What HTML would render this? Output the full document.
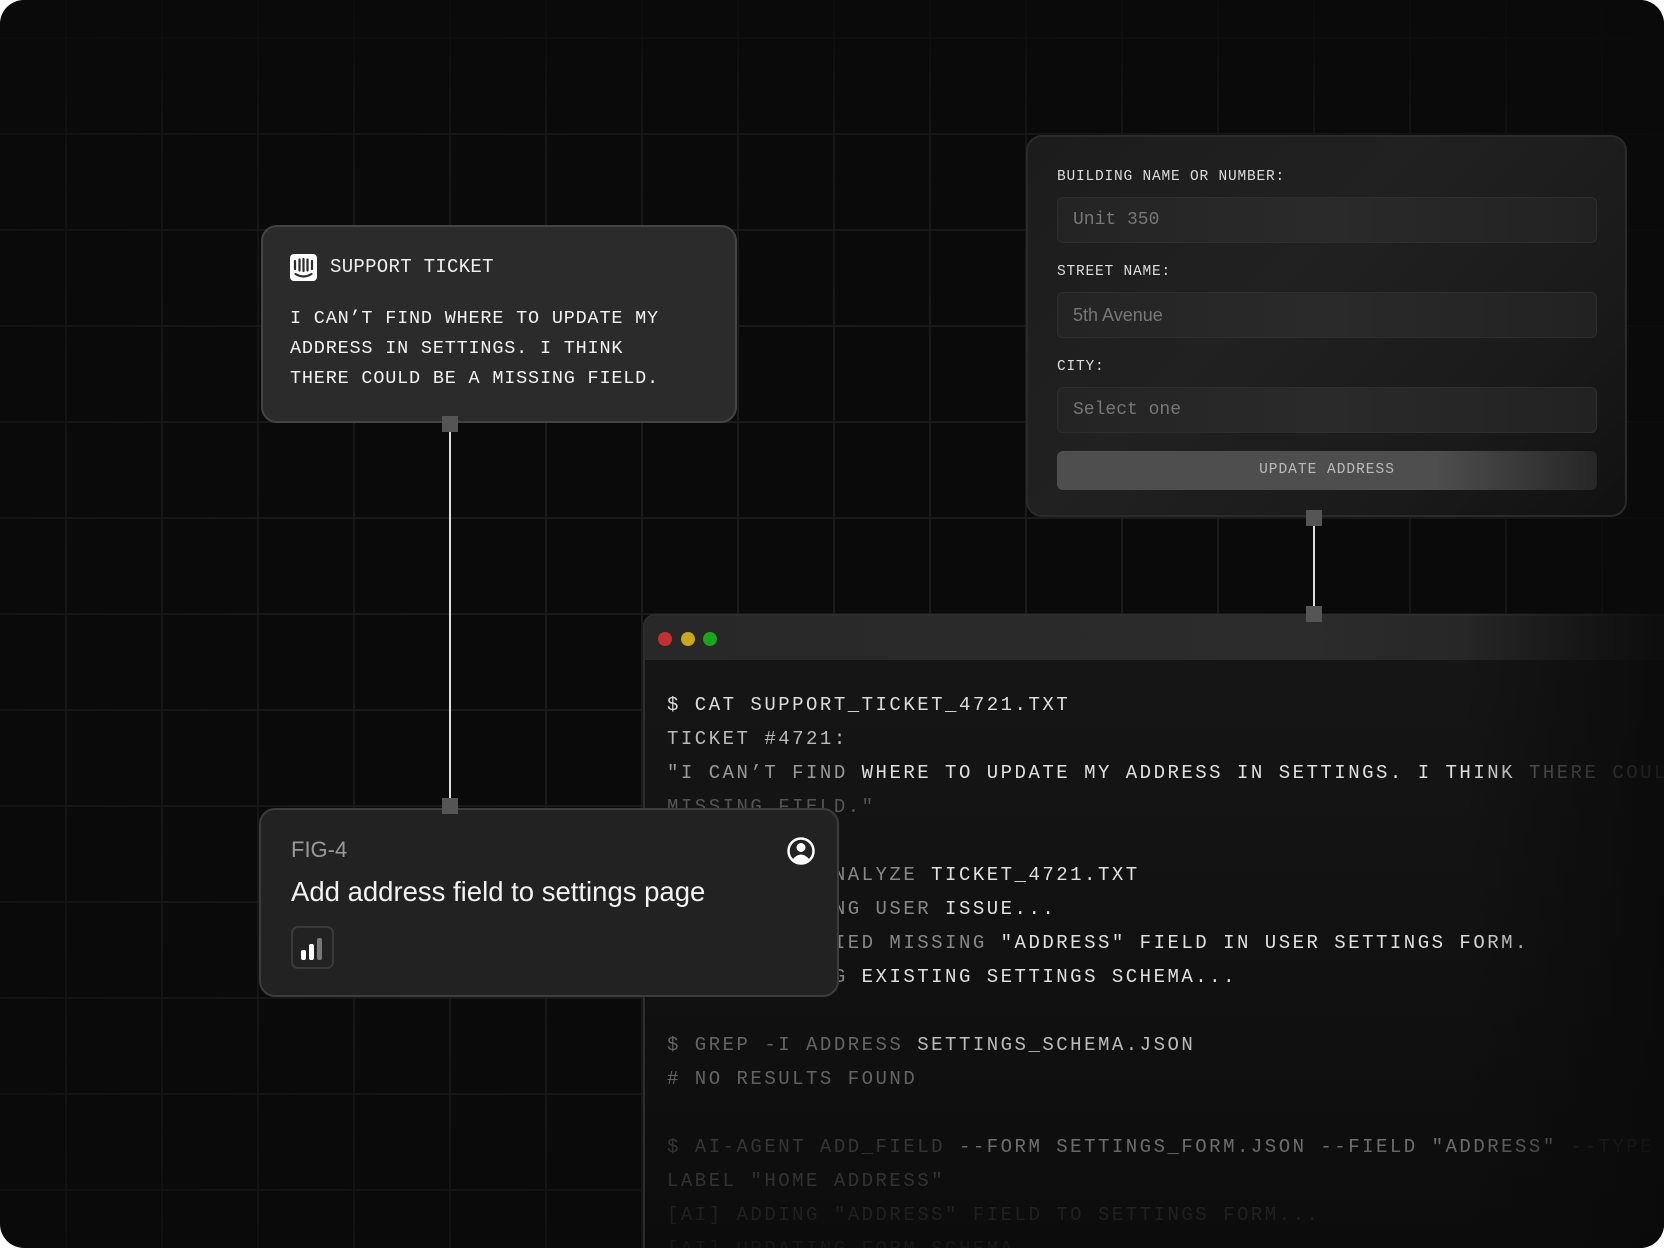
<!DOCTYPE html>
<html><head><meta charset="utf-8"><style>
*{margin:0;padding:0;box-sizing:border-box}
html,body{width:1664px;height:1248px;background:#fff;overflow:hidden}
.root{position:absolute;left:0;top:0;width:1664px;height:1248px;border-radius:24px;overflow:hidden;background:#0a0a0a}
.grid{position:absolute;inset:0;background-image:linear-gradient(to right,#1b1b1b 0,#1b1b1b 2px,transparent 2px),linear-gradient(to bottom,#1b1b1b 0,#1b1b1b 2px,transparent 2px);background-size:96px 96px;background-position:65px 37px;-webkit-mask-image:radial-gradient(ellipse 70% 65% at 50% 50%,#000 35%,rgba(0,0,0,.35) 100%)}
.mono{font-family:"Liberation Mono","DejaVu Sans Mono",monospace}
.sans{font-family:"Liberation Sans","DejaVu Sans",sans-serif}
.card1{position:absolute;left:261px;top:225px;width:476px;height:198px;background:#2b2b2b;border:2px solid #444;border-radius:16px}
.sq{position:absolute;width:16px;height:16px;background:#555}
.vline{position:absolute;width:2px;background:#ddd}
.card2{position:absolute;left:259px;top:808px;width:580px;height:189px;background:#222;border:2px solid #3c3c3c;border-radius:16px}
.form{position:absolute;left:1026px;top:135px;width:601px;height:382px;border:2px solid #2a2a2a;border-radius:16px;background:linear-gradient(135deg,#1c1c1c 0%,#212121 40%,#1a1a1a 75%,#111 100%)}
.lbl{position:absolute;left:29px;font-size:14.5px;color:#ddd;letter-spacing:.8px}
.inp{position:absolute;left:29px;width:540px;height:46px;border:1px solid #2e2e2e;border-radius:6px;background:linear-gradient(90deg,#242424,#2a2a2a 50%,#222);color:#777;font-size:18px;line-height:44px;padding-left:15px}
.btn{position:absolute;left:29px;top:314px;width:540px;height:39px;border-radius:6px;background:linear-gradient(90deg,#4e4e4e 0%,#4e4e4e 70%,#262626 100%);color:#bbb;font-size:14.5px;letter-spacing:1px;text-align:center;line-height:39px}
.term{position:absolute;left:643px;top:614px;width:1100px;height:650px;border:2px solid #2d2d2d;border-radius:12px;background:linear-gradient(180deg,#161616,#101010 70%,#0c0c0c);overflow:hidden}
.thead{height:44px;background:linear-gradient(90deg,#282828,#2c2c2c 60%,#1e1e1e 100%);border-radius:10px 10px 0 0}
.dot{position:absolute;top:16px;width:14px;height:14px;border-radius:50%}
.tbody{position:absolute;left:22px;top:72px;font-size:19px;line-height:34px;letter-spacing:2.5px;color:#e0e0e0;white-space:pre}
.bfade{position:absolute;left:0;top:380px;width:100%;height:270px;background:linear-gradient(180deg,rgba(14,14,14,0),rgba(14,14,14,.6) 60%,rgba(12,12,12,.85))}
.fade{position:absolute;right:0;top:0;width:200px;height:1248px;background:linear-gradient(90deg,rgba(10,10,10,0),rgba(10,10,10,.85))}
.topfade{position:absolute;left:0;top:0;width:1664px;height:140px;background:linear-gradient(180deg,rgba(10,10,10,.7),rgba(10,10,10,0))}
</style></head><body><div class="root">
<div class="grid"></div>
<div class="topfade"></div>

<div class="term">
  <div class="thead"></div>
  <div class="dot" style="left:13px;background:#c62f2f"></div>
  <div class="dot" style="left:36px;background:#c9a81d"></div>
  <div class="dot" style="left:58px;background:#1aa51e"></div>
  <div class="tbody mono"><span style="color:#ddd">$ CAT SUPPORT_TICKET_4721.TXT</span>
<span style="color:#bbb">TICKET #4721:</span>
<span style="color:#999">"I CAN’T FIND</span> WHERE TO UPDATE MY ADDRESS IN SETTINGS. I THINK <span style="color:#666">THERE COULD BE A</span>
<span style="color:#555">MISSING FIELD."</span>

<span style="color:#888">$ AI-AGENT ANALYZE</span> TICKET_4721.TXT
<span style="color:#888">[AI] ANALYZING USER</span> ISSUE...
<span style="color:#888">[AI] IDENTIFIED MISSING</span> "ADDRESS" FIELD IN USER SETTINGS FORM.
<span style="color:#888">[AI] CHECKING</span> EXISTING SETTINGS SCHEMA...

<span style="color:#777">$ GREP -I ADDRESS</span> SETTINGS_SCHEMA.JSON
<span style="color:#888"># NO RESULTS FOUND</span>

<span style="color:#666">$ AI-AGENT ADD_FIELD</span> --FORM SETTINGS_FORM.JSON --FIELD "ADDRESS" <span style="color:#555">--TYPE TEXT --</span>
<span style="color:#777">LABEL "HOME ADDRESS"</span>
<span style="color:#555">[AI] ADDING "ADDRESS" FIELD TO SETTINGS FORM...</span>
<span style="color:#444">[AI] UPDATING FORM SCHEMA...</span></div>
  <div class="bfade"></div>
</div>
<div class="fade"></div>

<div class="form mono">
  <div class="lbl" style="top:32px">BUILDING NAME OR NUMBER:</div>
  <div class="inp" style="top:60px">Unit 350</div>
  <div class="lbl" style="top:127px">STREET NAME:</div>
  <div class="inp sans" style="top:155px">5th Avenue</div>
  <div class="lbl" style="top:222px">CITY:</div>
  <div class="inp" style="top:250px">Select one</div>
  <div class="btn">UPDATE ADDRESS</div>
</div>

<div class="vline" style="left:1313px;top:522px;height:92px"></div>
<div class="sq" style="left:1306px;top:510px"></div>
<div class="sq" style="left:1306px;top:606px"></div>

<div class="vline" style="left:449px;top:425px;height:384px"></div>

<div class="card1 mono">
  <svg style="position:absolute;left:27px;top:27px" width="27" height="27" viewBox="0 0 27 27"><rect width="27" height="27" rx="4" fill="#fff"/><g stroke="#2b2b2b" stroke-width="2.2" stroke-linecap="round" fill="none"><path d="M5 7v8M9.5 5.5v11M13.5 5v12M17.5 5.5v11M22 7v8"/><path d="M5.5 20q8 5 16 0"/></g></svg>
  <div style="position:absolute;left:67px;top:29px;font-size:19px;color:#eee;letter-spacing:.3px">SUPPORT TICKET</div>
  <div style="position:absolute;left:27px;top:77px;font-size:18.5px;line-height:30px;color:#f2f2f2;letter-spacing:.8px;white-space:pre">I CAN’T FIND WHERE TO UPDATE MY
ADDRESS IN SETTINGS. I THINK
THERE COULD BE A MISSING FIELD.</div>
</div>
<div class="sq" style="left:442px;top:416px"></div>

<div class="card2 sans">
  <div style="position:absolute;left:30px;top:27px;font-size:22px;color:#999">FIG-4</div>
  <div style="position:absolute;left:30px;top:66px;font-size:27.5px;color:#f2f2f2">Add address field to settings page</div>
  <svg style="position:absolute;left:525px;top:26px" width="30" height="30" viewBox="0 0 30 30"><circle cx="15" cy="15" r="12.5" fill="none" stroke="#fff" stroke-width="2.5"/><circle cx="15" cy="11.5" r="4.5" fill="#fff"/><path d="M6.5 23.5q8.5-10 17 0q-8.5 6-17 0z" fill="#fff"/></svg>
  <div style="position:absolute;left:30px;top:116px;width:43px;height:43px;border:2px solid #3a3a3a;border-radius:7px">
    <div style="position:absolute;left:8px;top:22px;width:5px;height:10px;background:#fff;border-radius:2px"></div>
    <div style="position:absolute;left:16px;top:16px;width:5px;height:16px;background:#fff;border-radius:2px"></div>
    <div style="position:absolute;left:24px;top:10px;width:5px;height:22px;background:#777;border-radius:2px"></div>
  </div>
</div>
<div class="sq" style="left:442px;top:798px"></div>
</div></body></html>
